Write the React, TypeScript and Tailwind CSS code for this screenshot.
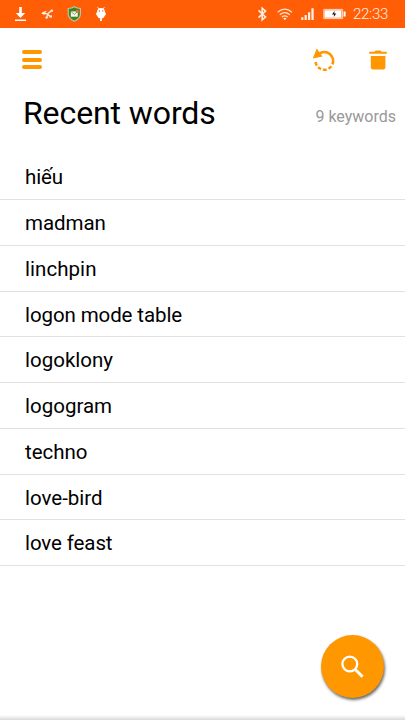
const words = [
  { text: "hiếu", tracking: "tracking-[-0.1px]" },
  { text: "madman", tracking: "tracking-[-0.05px]" },
  { text: "linchpin", tracking: "tracking-[0.05px]" },
  { text: "logon mode table", tracking: "tracking-[-0.1px]" },
  { text: "logoklony", tracking: "tracking-[0px]" },
  { text: "logogram", tracking: "tracking-[0px]" },
  { text: "techno", tracking: "tracking-[-0.05px]" },
  { text: "love-bird", tracking: "tracking-[0px]" },
  { text: "love feast", tracking: "tracking-[-0.1px]" },
];

function StatusBar() {
  return (
    <div className="flex h-7 items-center justify-between bg-[#ff5e07] text-[#fff1e8]">
      <svg className="h-7 w-[135px]" viewBox="0 0 135 28" fill="none">
        <path d="M19.2 7h2.6v6h3.4l-4.7 5-4.7-5h3.4zM15 19.4h11v1.7H15z" fill="#fff" />
        <path d="M43.5 13.2l4 .8 4.2-3.6M43.5 13.2l2.7-2M47 14l3.4 2.6M48 13.8l-1.4 4" stroke="#ffe9dc" strokeWidth="1.4" />
        <path d="M41.2 13.2l3.2-2v3.8z" fill="#fff" />
        <circle cx="51.8" cy="10.7" r="1.3" fill="#ffe9dc" />
        <circle cx="46.6" cy="17.6" r="1.2" fill="#ffe9dc" />
        <path d="M49.6 15.4h2.4v2.2h-2.4z" fill="#ffe9dc" />
        <path d="M74.3 6.8c2 1.3 4 1.7 6.1 1.7v5.6c0 3.4-2.7 5.8-6.1 7.2-3.4-1.4-6.1-3.8-6.1-7.2V8.5c2.1 0 4.1-.4 6.1-1.7z" fill="#43851d" stroke="#bac2aa" strokeWidth="1.2" />
        <path d="M70.8 11.4h7v5.3h-7z" fill="#f5f5ec" />
        <path d="M71 11.6l3.3 2.8 3.3-2.8" stroke="#6d9250" strokeWidth=".8" />
        <circle cx="77.3" cy="11.4" r="1.6" fill="#f26a45" />
        <path d="M97.6 7.2l1.5 2M104.4 7.2l-1.5 2" stroke="#fff" strokeWidth=".9" />
        <path d="M97 12.2c.1-2.7 1.7-4.1 4-4.1s3.9 1.4 4 4.1c.8.6 1 1.3.8 2.3l-1.6 2.2c-.5 1-1.3 1.5-2.3 1.5V21h-1.8v-2.8c-1 0-1.8-.5-2.3-1.5l-1.6-2.2c-.2-1 0-1.7.8-2.3z" fill="#fff" />
        <circle cx="99.4" cy="11" r=".7" fill="#ff5e07" />
        <circle cx="102.8" cy="11" r=".7" fill="#ff5e07" />
      </svg>
      <div className="flex items-center pr-[17px]">
        <svg className="h-7 w-[108px]" viewBox="0 0 108 28" fill="none">
          <path d="M13.5 10.4l7 6.6-3.3 2.7V8.3l3.3 2.7-7 6.6" stroke="#ffede2" strokeWidth="1.6" />
          <path d="M32.6 12.3q7.2-6.4 14.4 0M34.8 14.8q5-4.4 10 0M37 17.1q2.8-2.5 5.6 0" stroke="#ffe2d0" strokeWidth="1.3" />
          <path d="M38.2 18.4q1.6-1.4 3.2 0l-1.6 1.7z" fill="#fff" />
          <path d="M56.2 17.3h2.2V20h-2.2zM59.6 15h2.2v5h-2.2zM63 12.2h2.2V20H63zM66.4 8.2h2.3V20h-2.3z" fill="#ffeee4" />
          <path d="M78.8 9.4h18.8v9.2H78.8z" stroke="#ffd5bd" strokeWidth="1" />
          <path d="M79.5 10.2h17v7.6h-17zM98.6 11.6h2v4.8h-2z" fill="#fff" />
          <path d="M89.6 10.8l-2.6 3.8h2l-.2 2.4 2.5-3.6h-2z" fill="#2a1710" />
        </svg>
        <time className="w-[35px] whitespace-nowrap font-light text-[15px] leading-[29px] tracking-[-0.3px]">22:33</time>
      </div>
    </div>
  );
}

function Toolbar() {
  return (
    <div className="flex h-[63px] items-center justify-between pr-[15px] pl-[22px] text-[#ff9800]">
      <button aria-label="Menu" className="flex w-5 flex-col gap-[3.5px]">
        <span className="h-1 rounded-full bg-current" />
        <span className="h-1 rounded-full bg-current" />
        <span className="h-1 rounded-full bg-current" />
      </button>
      <div className="flex">
        <button aria-label="Restore">
          <svg className="h-6 w-[25px]" viewBox="0 0 25 24" fill="none">
            <path d="M6 5.9A8.8 8.8 0 0 1 19.4 16.4" stroke="currentColor" strokeWidth="2.7" />
            <path d="M18.3 18.3A8.8 8.8 0 0 1 2.5 12.6" stroke="currentColor" strokeWidth="2.5" strokeDasharray="3.7 1.9" />
            <path d="M3.7.6l5.8 7.9L-.2 10.5z" fill="currentColor" />
          </svg>
        </button>
        <button aria-label="Delete" className="ml-[28px]">
          <svg className="h-6 w-6" viewBox="0 0 24 24" fill="currentColor">
            <path d="M3.2 3.8h5.1l1.3-1.3h4.8l1.3 1.3h5.1v2H3.2zM4.8 8h14.6v11.6q0 1.8-1.8 1.8h-11q-1.8 0-1.8-1.8z" />
          </svg>
        </button>
      </div>
    </div>
  );
}

export default function App() {
  return (
    <main className="relative flex h-[720px] w-[405px] flex-col overflow-hidden bg-white font-[Roboto,sans-serif] text-black">
      <StatusBar />
      <Toolbar />
      <header className="flex h-[63.3px] items-start justify-between pr-[9px] pl-[23px]">
        <h1 className="text-[32px] leading-[45px] tracking-[-0.1px] whitespace-nowrap">Recent words</h1>
        <p className="mt-[13px] text-base leading-[25px] text-[#999] whitespace-nowrap">9 keywords</p>
      </header>
      <ul>
        {words.map((w) => (
          <li key={w.text} className="flex h-[45.75px] items-center border-b border-[#e1e1e1] pt-[1.2px] pl-[25px] text-[20.5px] leading-6">
            <span className={w.tracking}>{w.text}</span>
          </li>
        ))}
      </ul>
      <div className="mt-auto h-[5px] bg-linear-to-b from-white to-[#d9d9d9]" />
      <button aria-label="Search" className="absolute top-[635px] left-[321px] flex size-[63px] items-center justify-center rounded-full bg-[#ff9800] shadow-[1px_2px_3px_rgba(0,0,0,0.6)]">
        <svg className="size-6" viewBox="0 0 24 24" fill="none" stroke="white">
          <circle cx="8.8" cy="9" r="7.4" strokeWidth="2.3" />
          <path d="M14 14.2l7.6 7.6" strokeWidth="3" />
        </svg>
      </button>
    </main>
  );
}
